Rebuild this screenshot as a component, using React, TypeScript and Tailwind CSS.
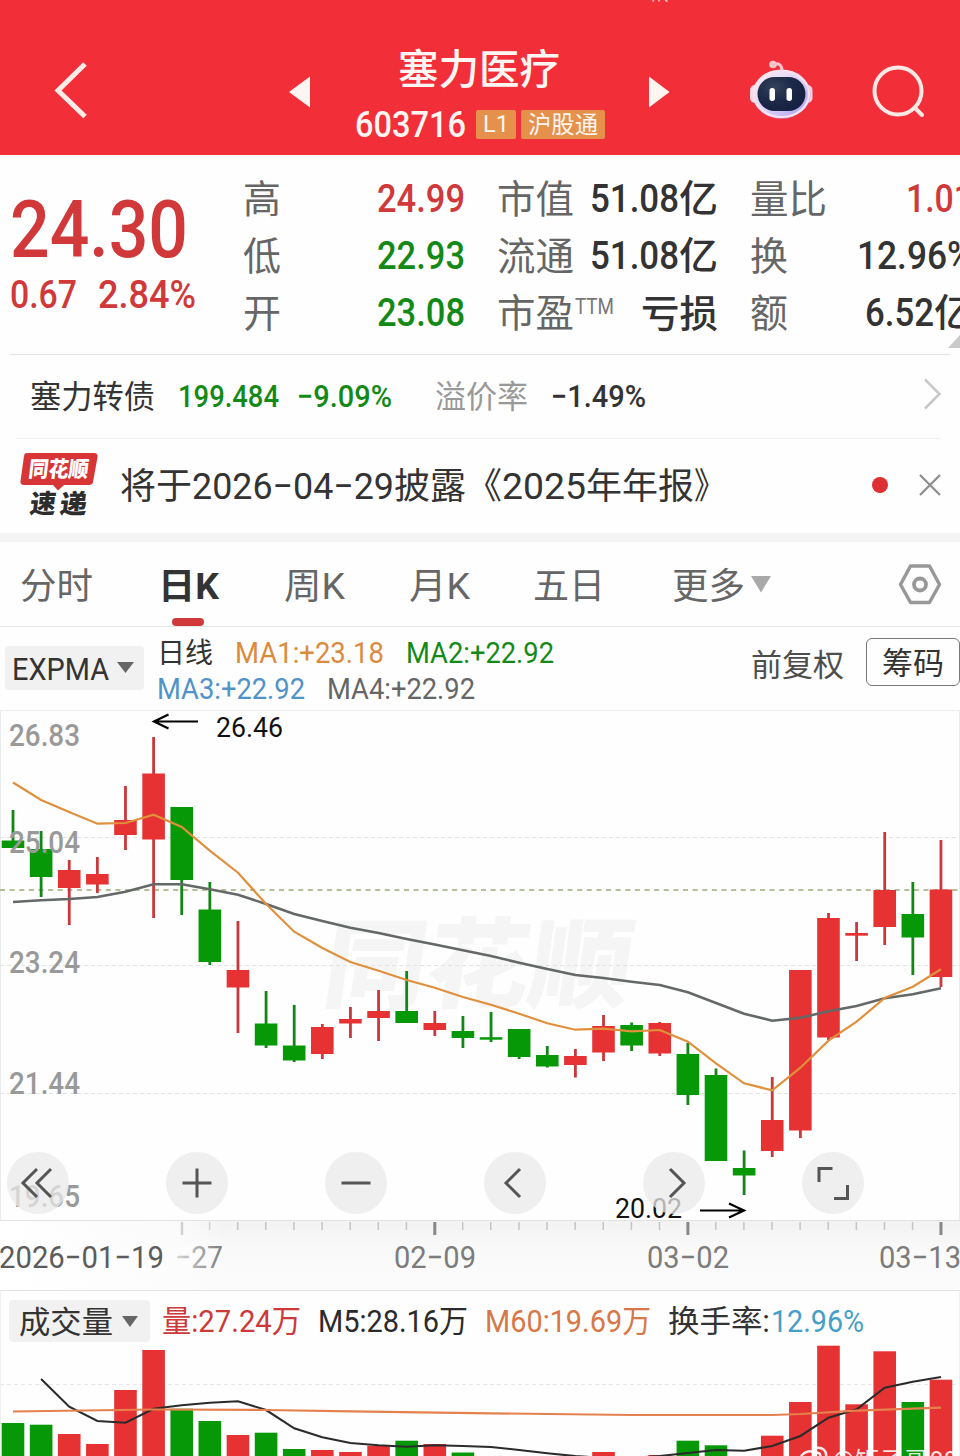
import { useLayoutEffect, useRef, type ReactNode } from "react";

const FONT = "font-['Roboto','Noto_Sans_CJK_SC',sans-serif]";

/** Text condensed or expanded horizontally to a fixed width. */
function Fit({ w, className = "", children }: { w: number; className?: string; children: ReactNode }) {
  const ref = useRef<HTMLSpanElement>(null);
  useLayoutEffect(() => {
    const el = ref.current;
    if (el && el.offsetWidth) el.style.transform = `scaleX(${w / el.getBoundingClientRect().width})`;
  }, [w]);
  return (
    <span className={`block shrink-0 whitespace-nowrap leading-none ${className}`} style={{ width: w }}>
      <span ref={ref} className="inline-block origin-left">
        {children}
      </span>
    </span>
  );
}

const RED = "#e63232";
const GREEN = "#069806";

const x = (i: number) => 13 + i * 28.12;

// direction, high, body top, body bottom, low
const candles: [string, number, number, number, number][] = [
  ["g", 810, 840.5, 848, 848],
  ["g", 831, 849, 877, 897],
  ["r", 860, 870, 888, 925],
  ["r", 857, 874, 884.5, 893],
  ["r", 786, 820, 835, 850],
  ["r", 737, 773.5, 839.5, 918],
  ["g", 807, 807, 880, 915],
  ["g", 882, 909.5, 962, 965],
  ["r", 921, 970, 987.5, 1033],
  ["g", 991, 1023.5, 1045.5, 1048],
  ["g", 1005, 1045.5, 1060.5, 1062],
  ["r", 1024, 1027, 1054, 1059],
  ["r", 1007, 1019, 1023.5, 1038],
  ["r", 990, 1011, 1018, 1041],
  ["g", 971, 1011, 1023, 1023],
  ["r", 1011, 1023, 1030, 1036],
  ["g", 1016, 1031, 1038, 1048],
  ["g", 1012, 1037.2, 1039.7, 1042],
  ["g", 1029, 1029, 1057, 1059],
  ["g", 1046, 1055, 1066.5, 1067.5],
  ["r", 1049, 1056, 1065, 1077.5],
  ["r", 1015, 1026, 1052.5, 1061],
  ["g", 1022.5, 1025, 1045.5, 1051],
  ["r", 1022, 1023, 1053.5, 1056],
  ["g", 1043, 1054, 1095, 1105],
  ["g", 1068.5, 1075, 1161, 1161],
  ["g", 1150.5, 1168, 1175.5, 1195],
  ["r", 1077, 1120, 1151, 1157],
  ["r", 970, 970, 1130.5, 1138],
  ["r", 913, 918, 1037.5, 1040],
  ["r", 922, 933, 935.7, 961],
  ["r", 832, 890, 927, 945],
  ["g", 882, 914, 937.5, 975],
  ["r", 840, 889.5, 977, 987],
];

const ma1 = [
  782.5, 800, 812, 823.7, 823, 814.7, 827, 850.7, 872.7, 904, 931.7, 948, 962, 970.7, 980, 987.7, 997, 1004.7, 1013.7,
  1023.3, 1029.7, 1028.7, 1031.3, 1030, 1041.7, 1063.3, 1083.3, 1090.3, 1067.7, 1040.7, 1021.7, 998, 986.7, 969.3,
];
const ma4 = [
  902, 900.3, 899, 897, 891.7, 884.3, 884.3, 889.3, 894.7, 904, 914, 921, 927.7, 933, 939, 944.5, 950.3, 956, 962.7, 969,
  975, 978, 981.7, 985, 992.3, 1003, 1013.7, 1020.7, 1017.7, 1011.3, 1006, 998.3, 994.3, 988.3,
];

// top edge of every volume bar
const volumes: [string, number][] = [
  ["g", 1423], ["g", 1424.7], ["r", 1434], ["r", 1444], ["r", 1390], ["r", 1350], ["g", 1408.7], ["g", 1421],
  ["r", 1435], ["g", 1432.7], ["g", 1449], ["r", 1450], ["r", 1452], ["r", 1445.7], ["g", 1440.7], ["r", 1444],
  ["g", 1452.5], ["g", 1456], ["g", 1456], ["g", 1456], ["r", 1456], ["r", 1452], ["g", 1456], ["r", 1455],
  ["g", 1440.7], ["g", 1445.3], ["g", 1456], ["r", 1435.7], ["r", 1402], ["r", 1345.7], ["r", 1404.3], ["r", 1351.3],
  ["g", 1402], ["r", 1379.7],
];
const m5 = [
  1379, 1406.7, 1421, 1422.7, 1408.7, 1405.3, 1402.7, 1401.3, 1410, 1428.3, 1437.3, 1443, 1445.3, 1446.7, 1445.3, 1446,
  1447, 1450, 1453.3, 1456, 1458, 1458, 1456, 1453, 1450, 1450.7, 1446, 1436, 1417.7, 1409.3, 1387.7, 1381.7, 1377,
];
const m60: [number, number][] = [
  [0, 1411.5], [5, 1409.5], [9, 1410], [12, 1411.3], [17, 1413.3], [22, 1415], [27, 1415], [28, 1414], [30, 1410.7], [33, 1407.7],
];

const line = (ys: number[], from = 0) => ys.map((y, i) => `${x(i + from).toFixed(1)},${y}`).join(" ");

function ChartText(p: { x: number; y: number; w: number; size: number; fill: string; children: string; weight?: number; opacity?: number }) {
  return (
    <text x={p.x} y={p.y} textLength={p.w} lengthAdjust="spacingAndGlyphs" fontSize={p.size} fill={p.fill} fontWeight={p.weight ?? 400} opacity={p.opacity}>
      {p.children}
    </text>
  );
}

function Header() {
  return (
    <header className="relative flex h-[155px] items-start bg-[#f22f38] text-[#fff5f2]">
      <svg className="absolute left-[650px] top-0" width="22" height="3" viewBox="0 0 22 3">
        <path d="M4 0 L2.500 1.500 M9 0 V1.500 M15 0 L17.500 1.500" stroke="#ffc9c9" strokeWidth="1.500" />
      </svg>
      <svg className="ml-[52px] mt-[60px] shrink-0" width="38" height="62" viewBox="0 0 38 62">
        <path d="M33 4 L6 30.500 L33 56.500" fill="none" stroke="#ffece8" strokeWidth="5" />
      </svg>
      <svg className="ml-[199px] mt-[76px] shrink-0" width="22" height="32" viewBox="0 0 22 32">
        <path d="M0 16 L21 0.500 V31.500 Z" fill="#fff5f2" />
      </svg>
      <div className="ml-[44px] flex w-[252px] shrink-0 flex-col pt-[50px]">
        <Fit w={162} className="ml-[43px] h-[44px] text-[41px] font-medium">塞力医疗</Fit>
        <div className="mt-[15px] flex h-[30px] items-center">
          <Fit w={111} className="text-[37px] font-medium">603716</Fit>
          <span className="ml-[10px] flex h-[29px] w-[40px] items-center justify-center rounded-[2px] bg-[#e5904b]">
            <Fit w={26} className="text-[24px]">L1</Fit>
          </span>
          <span className="ml-[5px] flex h-[29px] w-[84px] items-center justify-center rounded-[2px] bg-[#e5904b] pt-[3px]">
            <Fit w={70} className="text-[23.500px]">沪股通</Fit>
          </span>
        </div>
      </div>
      <svg className="ml-[42px] mt-[76px] shrink-0" width="22" height="32" viewBox="0 0 22 32">
        <path d="M20.500 16 L0 0.500 V31.500 Z" fill="#fff5f2" />
      </svg>
      <svg className="ml-[78px] mt-[58px] shrink-0" width="66" height="64" viewBox="0 0 66 64">
        <defs>
          <linearGradient id="shell" x1="0" y1="0" x2="1" y2="1">
            <stop offset="0" stopColor="#fff0f2" />
            <stop offset="0.550" stopColor="#dcd0f8" />
            <stop offset="0.800" stopColor="#b9b0f2" />
            <stop offset="1" stopColor="#f6dcea" />
          </linearGradient>
          <radialGradient id="visor" cx="0.350" cy="0.300" r="0.800">
            <stop offset="0" stopColor="#34415c" />
            <stop offset="0.500" stopColor="#1c2947" />
            <stop offset="1" stopColor="#161f42" />
          </radialGradient>
        </defs>
        <path d="M25 6 C30 5 33 7 33 13" fill="none" stroke="#ffc4cb" strokeWidth="3" />
        <circle cx="24" cy="6.500" r="3.800" fill="#ffc4cb" />
        <rect x="1" y="27" width="10" height="18" rx="5" fill="#ffd9e2" />
        <rect x="53.500" y="27" width="10" height="18" rx="5" fill="#f6cfe4" />
        <ellipse cx="32.500" cy="36" rx="29" ry="24.500" fill="url(#shell)" />
        <ellipse cx="32.500" cy="36" rx="27.500" ry="23" fill="none" stroke="#f8e2f0" strokeWidth="2" />
        <rect x="8.500" y="19" width="48" height="34" rx="17" fill="url(#visor)" />
        <rect x="20.500" y="30" width="5.500" height="13" rx="2.700" fill="#fff" />
        <rect x="37.500" y="30" width="5.500" height="13" rx="2.700" fill="#fff" />
      </svg>
      <svg className="ml-[56px] mt-[64px] shrink-0" width="56" height="56" viewBox="0 0 56 56">
        <circle cx="27" cy="27" r="23.500" fill="none" stroke="#ffe8e4" strokeWidth="4" />
        <path d="M43.500 43.500 L51 51" stroke="#ffe8e4" strokeWidth="4" strokeLinecap="round" />
      </svg>
    </header>
  );
}

function Quote() {
  const label = "pt-[4px] text-[38.500px] text-[#666]";
  const num = "text-[38px] font-medium";
  return (
    <section className="flex h-[199px] w-[972px] items-start">
      <div className="w-[243px] shrink-0 pl-[10px] text-[#d0383a]">
        <Fit w={178} className="mt-[36px] text-[79px] font-medium">24.30</Fit>
        <div className="mt-[6px] flex">
          <Fit w={67} className="text-[38px] font-medium">0.67</Fit>
          <Fit w={98} className="ml-[21px] text-[38px] font-medium">2.84%</Fit>
        </div>
      </div>
      <div className="mt-[15px] flex w-[222px] shrink-0 flex-col">
        {[
          ["高", "24.99", "text-[#d0383a]"],
          ["低", "22.93", "text-[#138a17]"],
          ["开", "23.08", "text-[#138a17]"],
        ].map(([k, v, c]) => (
          <div key={k} className="flex h-[57px] items-center justify-between">
            <Fit w={38} className={label}>{k}</Fit>
            <Fit w={88} className={`${num} ${c}`}>{v}</Fit>
          </div>
        ))}
      </div>
      <div className="ml-[32px] mt-[15px] flex w-[221px] shrink-0 flex-col text-[#333]">
        {["市值", "流通"].map((k) => (
          <div key={k} className="flex h-[57px] items-center justify-between">
            <Fit w={77} className={label}>{k}</Fit>
            <span className="flex">
              <Fit w={89} className={num}>51.08</Fit>
              <Fit w={39} className={num}>亿</Fit>
            </span>
          </div>
        ))}
        <div className="flex h-[57px] items-center">
          <Fit w={77} className={label}>市盈</Fit>
          <Fit w={39} className="ml-px mt-[-11px] text-[22px] text-[#777]">TTM</Fit>
          <Fit w={77} className={`ml-auto pt-[2px] ${num}`}>亏损</Fit>
        </div>
      </div>
      <div className="ml-[32px] mt-[15px] flex w-[223px] shrink-0 flex-col text-[#333]">
        <div className="flex h-[57px] items-center justify-between">
          <Fit w={77} className={label}>量比</Fit>
          <Fit w={67} className={`${num} text-[#d0383a]`}>1.01</Fit>
        </div>
        <div className="flex h-[57px] items-center justify-between">
          <Fit w={38} className={label}>换</Fit>
          <Fit w={116} className={num}>12.96%</Fit>
        </div>
        <div className="flex h-[57px] items-center justify-between">
          <Fit w={38} className={label}>额</Fit>
          <span className="flex">
            <Fit w={69} className={num}>6.52</Fit>
            <Fit w={39} className={num}>亿</Fit>
          </span>
        </div>
      </div>
    </section>
  );
}

function BondRow() {
  return (
    <section className="relative ml-[10px] mr-[10px] flex h-[84px] items-center border-t border-[#e4e4e4] pl-[20px] text-[#333]">
      <svg className="absolute -top-[20px] right-[-10px]" width="12" height="13" viewBox="0 0 12 13">
        <path d="M0 13 L12 0 V13 Z" fill="#c9c9c9" />
      </svg>
      <Fit w={125} className="pt-[2px] text-[31.500px]">塞力转债</Fit>
      <Fit w={101} className="ml-[23px] text-[31px] font-medium text-[#138a17]">199.484</Fit>
      <Fit w={95} className="ml-[18px] text-[31px] font-medium text-[#138a17]">−9.09%</Fit>
      <Fit w={93} className="ml-[43px] pt-[2px] text-[31.500px] text-[#999]">溢价率</Fit>
      <Fit w={95} className="ml-[23px] text-[31px] font-medium">−1.49%</Fit>
      <svg className="mb-[5px] ml-auto mr-[8px]" width="20" height="34" viewBox="0 0 20 34">
        <path d="M3 2.500 L17.500 17 L3 31.500" fill="none" stroke="#c8c8c8" strokeWidth="2.500" />
      </svg>
    </section>
  );
}

function NewsRow() {
  return (
    <section className="flex h-[94px] items-center pb-[2px]">
      <svg className="mb-[4px] ml-[19px] shrink-0" width="80" height="72" viewBox="0 0 80 72">
        <path d="M8 6 H75 Q79 6 78.500 10 L74 35 Q73.500 38 70 38 H45 L39 43.500 L34 38 H5 Q1 38 1.500 34 L5 9 Q5.500 6 8 6 Z" fill="#d83537" />
        <g transform="skewX(-7)" fontFamily="Noto Sans CJK SC, sans-serif" fontWeight="900">
          <text x="12.500" y="30.500" fontSize="22" textLength="60" lengthAdjust="spacingAndGlyphs" fill="#fff">同花顺</text>
          <text x="18" y="66" fontSize="26" textLength="26" lengthAdjust="spacingAndGlyphs" fill="#2d2d2d">速</text>
          <text x="48" y="66" fontSize="26" textLength="27" lengthAdjust="spacingAndGlyphs" fill="#2d2d2d">递</text>
        </g>
      </svg>
      <div className="ml-[21px] flex pt-[2px] text-[36px] text-[#333]">
        <Fit w={72} className="pt-[2px]">将于</Fit>
        <Fit w={202} className="pt-[1px] text-[37px]">2026−04−29</Fit>
        <Fit w={108} className="pt-[2px]">披露《</Fit>
        <Fit w={84} className="pt-[1px] text-[37px]">2025</Fit>
        <Fit w={108} className="pt-[2px]">年年报</Fit>
        <Fit w={31} className="pt-[2px]">》</Fit>
      </div>
      <span className="ml-auto size-[16px] rounded-full bg-[#dc3033]" />
      <svg className="ml-[30px] mr-[18px]" width="24" height="24" viewBox="0 0 24 24">
        <path d="M2 2 L22 22 M22 2 L2 22" stroke="#8e8e8e" strokeWidth="2.300" />
      </svg>
    </section>
  );
}

function Tabs() {
  const tab = "pt-[5px]";
  return (
    <nav className="flex h-[85px] items-center border-b border-[#e6e6e6] pl-[20px] text-[36px] text-[#666]">
      <Fit w={73} className={tab}>分时</Fit>
      <div className="relative ml-[65px] flex h-full items-center">
        <Fit w={61} className="pt-[5px] font-bold text-[#333]">日K</Fit>
        <span className="absolute bottom-0 left-[14px] h-[8px] w-[32px] rounded-full bg-[#d0383a]" />
      </div>
      <Fit w={61} className={`ml-[65px] ${tab}`}>周K</Fit>
      <Fit w={61} className={`ml-[64px] ${tab}`}>月K</Fit>
      <Fit w={72} className={`ml-[63px] ${tab}`}>五日</Fit>
      <Fit w={73} className={`ml-[67px] ${tab}`}>更多</Fit>
      <svg className="ml-[6px]" width="20" height="17" viewBox="0 0 20 17">
        <path d="M0 0 H20 L10 16.500 Z" fill="#a9a9a9" />
      </svg>
      <svg className="ml-auto mr-[18px]" width="44" height="42" viewBox="0 0 44 42">
        <path d="M12.500 3 H31.500 L41.500 21.500 L31.500 39.500 H12.500 L2.500 21.500 Z" fill="none" stroke="#989898" strokeWidth="3.500" strokeLinejoin="round" />
        <circle cx="22" cy="21.500" r="6" fill="none" stroke="#989898" strokeWidth="3.800" />
      </svg>
    </nav>
  );
}

function Indicators() {
  return (
    <section className="flex h-[83px] items-start">
      <div className="ml-[5px] mt-[19px] flex h-[44px] w-[139px] items-center rounded-[4px] bg-[#f1f1f1] pl-[7px]">
        <Fit w={97} className="pt-[3px] text-[31px] text-[#333]">EXPMA</Fit>
        <svg className="mb-[2px] ml-[8px]" width="17" height="11" viewBox="0 0 17 11">
          <path d="M0 0 H17 L8.500 11 Z" fill="#666" />
        </svg>
      </div>
      <div className="ml-[13px] flex w-[440px] flex-col pt-[8px] text-[29px]">
        <div className="flex h-[36px] items-center">
          <Fit w={56} className="pt-[2px] text-[28px] text-[#333]">日线</Fit>
          <Fit w={149} className="ml-[22px] text-[#db8b3d]">MA1:+23.18</Fit>
          <Fit w={148} className="ml-[22px] text-[#138a17]">MA2:+22.92</Fit>
        </div>
        <div className="flex h-[36px] items-center">
          <Fit w={148} className="text-[#5093c9]">MA3:+22.92</Fit>
          <Fit w={148} className="ml-[22px] text-[#666]">MA4:+22.92</Fit>
        </div>
      </div>
      <Fit w={93} className="ml-auto mt-[23px] text-[31px] text-[#4d4d4d]">前复权</Fit>
      <div className="ml-[22px] mt-[11px] flex h-[48px] w-[94px] items-center justify-center rounded-[6px] border border-[#777] pt-[2px] text-[31px] text-[#333]">
        <Fit w={62}>筹码</Fit>
      </div>
    </section>
  );
}

const buttonIcons = [
  "M30 -14 l-14 14 l14 14 M44 -14 l-14 14 l14 14",
  "M16.500 0 h29 M31 -14.500 v29",
  "M16.500 0 h29",
  "M36 -14 l-14 14 l14 14",
  "M27 -14 l14 14 l-14 14",
  "M17 -1 v-13.500 h13.500 M45.500 2 v13.500 h-13.500",
];

function PriceChart() {
  return (
    <section className="relative h-[581px]">
      <svg className="block" width="960" height="581" viewBox="0 710 960 581">
        <defs>
          <linearGradient id="axisFade" x1="0" y1="0" x2="1" y2="0">
            <stop offset="0" stopColor="#fff" />
            <stop offset="0.180" stopColor="#fdfdfd" stopOpacity="0.750" />
            <stop offset="0.235" stopColor="#fff" stopOpacity="0" />
          </linearGradient>
          <linearGradient id="axisBg" x1="0" y1="0" x2="0" y2="1">
            <stop offset="0" stopColor="#f2f2f2" />
            <stop offset="0.400" stopColor="#f9f9f9" />
            <stop offset="1" stopColor="#fbfbfb" />
          </linearGradient>
        </defs>
        <path d="M0.500 1220 V710.500 H959.500 V1220" fill="none" stroke="#e9ecec" />
        <g transform="translate(320 1000) skewX(-8)">
          <text x="0" y="0" fontSize="98" fontWeight="900" fontFamily="Noto Sans CJK SC, sans-serif" textLength="308" lengthAdjust="spacingAndGlyphs" fill="#f5f5f5">同花顺</text>
        </g>
        <g stroke="#e3e3e3" strokeDasharray="4 3">
          <path d="M0 837.500 H960" />
          <path d="M0 965.500 H960" />
          <path d="M0 1093.500 H960" />
        </g>
        <path d="M0 890 H960" stroke="#9aaa78" strokeWidth="1.400" strokeDasharray="5 4.620" />
        {candles.map(([d, h, t, b, l], i) => (
          <g key={i}>
            <rect x={x(i) - 1.4} y={h} width="2.800" height={l - h} fill={d === "r" ? "#c8383c" : "#148618"} />
            <rect x={x(i) - 11.3} y={t} width="22.600" height={b - t} fill={d === "r" ? RED : GREEN} />
          </g>
        ))}
        <polyline points={line(ma4)} fill="none" stroke="#646866" strokeWidth="2.600" />
        <polyline points={line(ma1)} fill="none" stroke="#e08f3c" strokeWidth="2.200" />
        <ChartText x={9} y={746} w={71} size={31} fill="#999" weight={500}>26.83</ChartText>
        <ChartText x={9} y={852.500} w={71} size={31} fill="#999" weight={500}>25.04</ChartText>
        <ChartText x={9} y={973} w={71} size={31} fill="#999" weight={500}>23.24</ChartText>
        <ChartText x={9} y={1093.500} w={71} size={31} fill="#999" weight={500}>21.44</ChartText>
        <ChartText x={9} y={1206.500} w={71} size={31} fill="#999" weight={500}>19.65</ChartText>
        <ChartText x={216} y={737} w={67} size={28} fill="#111">26.46</ChartText>
        <path d="M198 721.500 H155 M168.500 714.500 L154 721.500 L168.500 728.500" fill="none" stroke="#000" strokeWidth="2.200" />
        <ChartText x={615} y={1217.500} w={67} size={28} fill="#111">20.02</ChartText>
        <path d="M700 1210.500 H743 M729 1203.500 L744 1210.500 L729 1217.500" fill="none" stroke="#000" strokeWidth="2.200" />
        <rect x="0" y="1221" width="960" height="69" fill="url(#axisBg)" />
        {candles.map((_, i) =>
          i < 6 ? null : (
            <rect
              key={i}
              x={x(i) - (i % 9 === 6 && i > 6 ? 1.5 : 1)}
              y="1222"
              width={i % 9 === 6 && i > 6 ? 3 : i === 6 ? 2.5 : 1.5}
              height={i % 9 === 6 ? 13 : 8}
              fill={i % 9 === 6 ? "#888" : "#c4c4c4"}
            />
          ),
        )}
        <ChartText x={175} y={1267.500} w={48} size={31} fill="#777">−27</ChartText>
        <rect x="0" y="1221" width="960" height="69" fill="url(#axisFade)" />
        <path d="M0 1220.500 H960 M0 1290.500 H960" stroke="#e2e2e2" />
        <ChartText x={-1} y={1267.500} w={165} size={31} fill="#5c5c5c">2026−01−19</ChartText>
        <ChartText x={394} y={1267.500} w={82} size={31} fill="#7c7c7c">02−09</ChartText>
        <ChartText x={647} y={1267.500} w={82} size={31} fill="#7c7c7c">03−02</ChartText>
        <ChartText x={879} y={1267.500} w={82} size={31} fill="#7c7c7c">03−13</ChartText>
      </svg>
      <div className="absolute left-[7px] top-[442px] flex gap-[97px]">
        {buttonIcons.map((d) => (
          <button key={d} className="size-[62px] shrink-0 rounded-full bg-[#e9e9e9]/75">
            <svg width="62" height="62" viewBox="0 -31 62 62">
              <path d={d} fill="none" stroke="#555" strokeWidth="3" />
            </svg>
          </button>
        ))}
      </div>
    </section>
  );
}

function Volume() {
  return (
    <section className="relative h-[165px]">
      <div className="flex h-[60px] items-center text-[31px]">
        <div className="ml-[9px] flex h-[42px] w-[141px] items-center rounded-[4px] bg-[#f1f1f1] pl-[10px]">
          <Fit w={94} className="pt-[2px] text-[#333]">成交量</Fit>
          <svg className="ml-[9px]" width="16" height="11" viewBox="0 0 16 11">
            <path d="M0 0 H16 L8 11 Z" fill="#666" />
          </svg>
        </div>
        <Fit w={139} className="ml-[12px] text-[#cc3a3a]">量:27.24万</Fit>
        <Fit w={150} className="ml-[17px] text-[#2b2b2b]">M5:28.16万</Fit>
        <Fit w={166} className="ml-[17px] text-[#d87748]">M60:19.69万</Fit>
        <Fit w={102} className="ml-[17px] pt-[1px] text-[#333]">换手率:</Fit>
        <Fit w={93} className="ml-[1px] text-[#459fc8]">12.96%</Fit>
      </div>
      <svg className="block" width="960" height="105" viewBox="0 1351 960 105" overflow="visible">
        <path d="M0 1384.500 H960" stroke="#e6e6e6" strokeDasharray="4 3" />
        <path d="M0.500 1291 V1456 M959.500 1291 V1456" stroke="#eff0f0" />
        {volumes.map(([d, t], i) => (
          <rect key={i} x={x(i) - 11.3} y={t} width="22.600" height={1456 - t} fill={d === "r" ? RED : GREEN} />
        ))}
        <polyline points={line(m5, 1)} fill="none" stroke="#2b2b2b" strokeWidth="2.100" />
        <polyline points={m60.map(([i, y]) => `${x(i)},${y}`).join(" ")} fill="none" stroke="#e5814f" strokeWidth="2.200" />
        <g fill="none" stroke="#fff" strokeWidth="2.500" opacity="0.900">
          <path d="M801 1456 C805 1451 811 1450 814 1453 M816 1448 C823 1447 827 1451 826 1457 M815 1453 C819 1452 821 1454 820 1457" />
        </g>
        <g fontSize="25" fill="#fff" opacity="0.850">
          <text x="832" y="1470">@矩子哥88</text>
        </g>
      </svg>
    </section>
  );
}

export default function App() {
  return (
    <main className={`h-[1456px] w-[960px] overflow-hidden bg-[#fefefe] ${FONT}`}>
      <Header />
      <Quote />
      <BondRow />
      <div className="ml-[16px] mr-[20px] h-px bg-[#f0f0f0]" />
      <NewsRow />
      <div className="h-[9px] bg-[#f4f4f4]" />
      <Tabs />
      <Indicators />
      <PriceChart />
      <Volume />
    </main>
  );
}
